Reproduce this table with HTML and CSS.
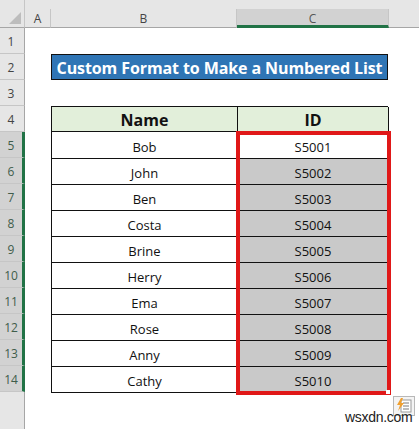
FILE: index.html
```html
<!DOCTYPE html>
<html>
<head>
<meta charset="utf-8">
<link rel="stylesheet" href="styles.css">
</head>
<body>
<div class="sheet">
  <div class="corner"><span class="tri"></span></div>
  <div class="colheads">
    <div class="ch col-a">A</div>
    <div class="ch col-b">B</div>
    <div class="ch col-c sel">C</div>
    <div class="ch col-d"></div>
  </div>
  <div class="rowheads">
    <div class="rh">1</div>
    <div class="rh">2</div>
    <div class="rh">3</div>
    <div class="rh">4</div>
    <div class="rh sel">5</div>
    <div class="rh sel">6</div>
    <div class="rh sel">7</div>
    <div class="rh sel">8</div>
    <div class="rh sel">9</div>
    <div class="rh sel">10</div>
    <div class="rh sel">11</div>
    <div class="rh sel">12</div>
    <div class="rh sel">13</div>
    <div class="rh sel">14</div>
    <div class="rh rest"></div>
  </div>
  <div class="body">
    <div class="title">Custom Format to Make a Numbered List</div>
    <div class="table">
      <div class="th name">Name</div><div class="th id">ID</div>
      <div class="td name">Bob</div><div class="td id first">S5001</div>
      <div class="td name">John</div><div class="td id">S5002</div>
      <div class="td name">Ben</div><div class="td id">S5003</div>
      <div class="td name">Costa</div><div class="td id">S5004</div>
      <div class="td name">Brine</div><div class="td id">S5005</div>
      <div class="td name">Herry</div><div class="td id">S5006</div>
      <div class="td name">Ema</div><div class="td id">S5007</div>
      <div class="td name">Rose</div><div class="td id">S5008</div>
      <div class="td name">Anny</div><div class="td id">S5009</div>
      <div class="td name">Cathy</div><div class="td id">S5010</div>
      <div class="selection"><span class="handle"></span></div>
    </div>
  </div>
  <div class="watermark">
    <svg class="wm-icon" width="22" height="20" viewBox="0 0 22 20">
      <rect x="0.5" y="0.5" width="21" height="19" fill="#f4f4f4" stroke="#b8b8b8"/>
      <rect x="8" y="4" width="10" height="12" fill="#fff" stroke="#9a9a9a"/>
      <line x1="10" y1="7" x2="16" y2="7" stroke="#7a7a7a"/>
      <line x1="10" y1="10" x2="16" y2="10" stroke="#7a7a7a"/>
      <line x1="10" y1="13" x2="16" y2="13" stroke="#7a7a7a"/>
      <path d="M8 2 L4 9 L7 9 L5 15 L11 7 L8 7 L10 2 Z" fill="#f0a030"/>
    </svg>
    <span class="wm-text">wsxdn.com</span>
  </div>
</div>
</body>
</html>
```

FILE: styles.css
```css
html, body {
  margin: 0;
  padding: 0;
  background: #ffffff;
}
.sheet {
  position: relative;
  width: 419px;
  height: 429px;
  display: grid;
  grid-template-columns: 25px 394px;
  grid-template-rows: 28px 401px;
  overflow: hidden;
  font-family: "Open Sans", "Noto Sans", sans-serif;
}
.corner {
  position: relative;
  background: #e6e6e6;
  border-right: 1px solid #c6c6c6;
  border-bottom: 1px solid #a6a6a6;
  box-sizing: border-box;
}
.tri {
  position: absolute;
  right: 3px;
  bottom: 3px;
  width: 0;
  height: 0;
  border-left: 12px solid transparent;
  border-bottom: 12px solid #bdbdbd;
}
.colheads {
  display: flex;
  background: #e6e6e6;
  padding-top: 9px;
  box-sizing: border-box;
}
.ch {
  height: 19px;
  box-sizing: border-box;
  border-right: 1px solid #c6c6c6;
  border-bottom: 1px solid #a6a6a6;
  font-size: 12px;
  color: #444;
  display: flex;
  align-items: center;
  justify-content: center;
}
.col-a { width: 26px; }
.col-b { width: 186px; }
.col-c { width: 152px; }
.col-d { flex: 1; border-right: none; }
.ch.sel {
  background: #d2d2d2;
  border-bottom: 3px solid #217346;
  color: #555;
  padding-top: 2px;
}
.rowheads {
  display: flex;
  flex-direction: column;
  background: #e6e6e6;
}
.rh {
  height: 26px;
  box-sizing: border-box;
  border-bottom: 1px solid #c6c6c6;
  border-right: 1px solid #a6a6a6;
  font-size: 12px;
  color: #444;
  display: flex;
  align-items: center;
  justify-content: center;
  padding-top: 2px;
  padding-right: 2px;
}
.rh.sel {
  background: #d2d2d2;
  border-right: 3px solid #217346;
  color: #3f5d4b;
  padding-right: 0;
}
.rh.rest {
  flex: 1;
  border-bottom: none;
}
.body {
  background: #fff;
  padding: 26px 0 0 26px;
  box-sizing: border-box;
}
.title {
  width: 337px;
  height: 26px;
  box-sizing: border-box;
  background: #2f75b5;
  border: 1px solid #111;
  color: #fff;
  font-weight: bold;
  font-size: 16px;
  display: flex;
  align-items: center;
  justify-content: center;
  padding-top: 1px;
  letter-spacing: -0.1px;
}
.table {
  position: relative;
  margin-top: 26px;
  width: 337px;
  display: grid;
  grid-template-columns: 186px 151px;
  grid-auto-rows: 26px;
  border-top: 1px solid #111;
  border-left: 1px solid #111;
  box-sizing: border-box;
}
.th, .td {
  box-sizing: border-box;
  border-right: 1px solid #111;
  border-bottom: 1px solid #111;
  display: flex;
  align-items: center;
  justify-content: center;
  color: #111;
}
.th {
  background: #e2efda;
  font-weight: bold;
  font-size: 16px;
  height: 25px;
  padding-top: 2px;
}
.td {
  font-size: 13px;
  padding-top: 2px;
}
.td.id { background: #c9c9c9; }
.td.id.first { background: #fff; }
.selection {
  position: absolute;
  left: 184px;
  top: 24px;
  width: 155px;
  height: 264px;
  border: 4px solid #e01818;
  box-sizing: border-box;
  pointer-events: none;
}
.handle {
  position: absolute;
  right: -3px;
  bottom: -3px;
  width: 4px;
  height: 4px;
  background: #fff;
}
.watermark {
  position: absolute;
  left: 345px;
  top: 395px;
  width: 72px;
  height: 34px;
}
.wm-icon {
  position: absolute;
  left: 48px;
  top: 1px;
}
.wm-text {
  position: absolute;
  left: 0;
  top: 14px;
  font-size: 14px;
  color: #222;
  font-family: "Liberation Sans", Arial, sans-serif;
  letter-spacing: -0.3px;
}
```
